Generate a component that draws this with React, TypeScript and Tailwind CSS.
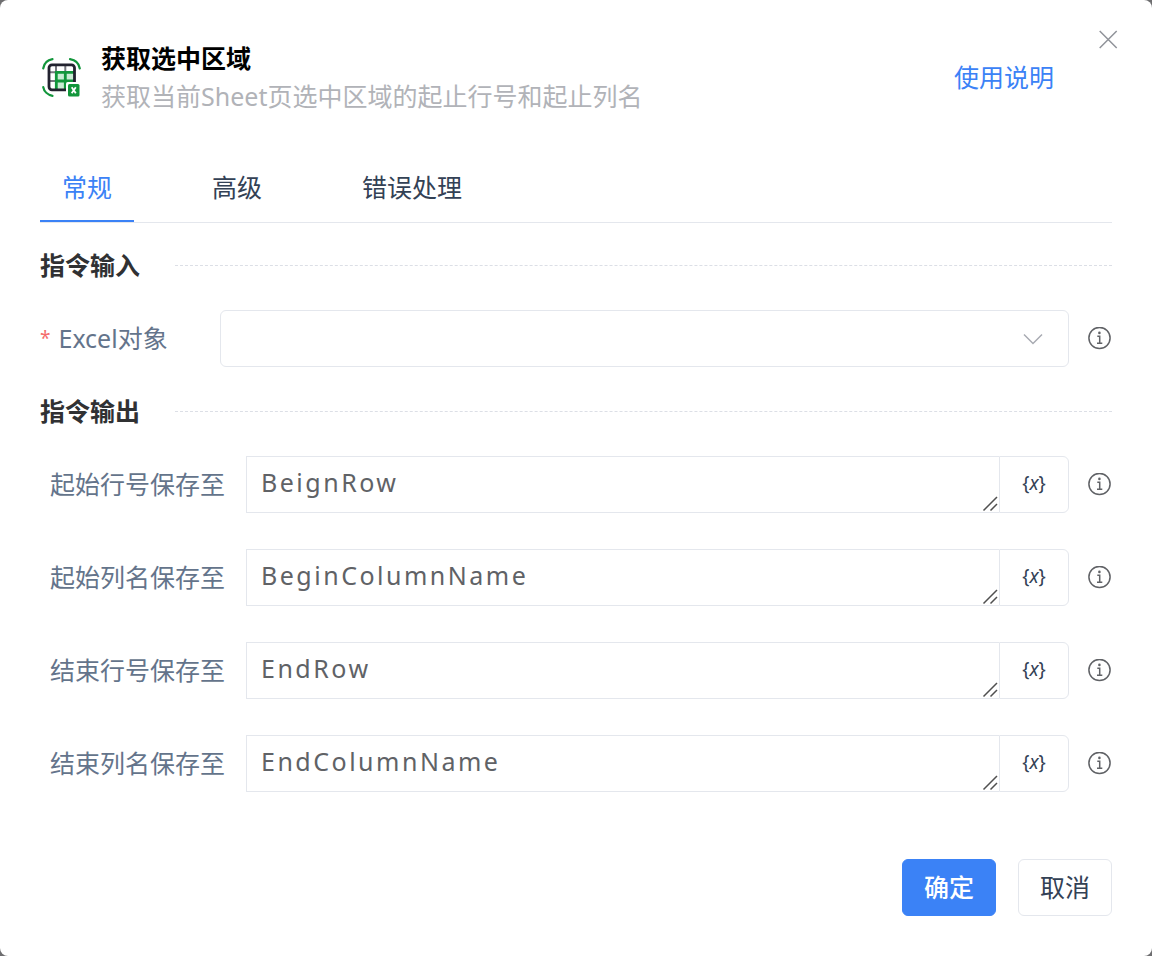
import { useState } from "react";

const BODY_FONT = "font-['Noto_Sans','Noto_Sans_CJK_SC',sans-serif]";

function RegionIcon() {
  return (
    <svg className="size-[42px] shrink-0" viewBox="0 0 42 42" fill="none" aria-hidden="true">
      <g stroke="#12963b" strokeWidth="2.200" strokeLinecap="round">
        <path d="M3.200 12.500C4 7.500 7.800 4 12.500 3.200" />
        <path d="M30 3.200C35 4 39 7.500 39.800 12.500" />
        <path d="M3.200 31C4 35.500 7.800 39 12.500 39.800" />
      </g>
      <rect x="16" y="16" width="18" height="17" fill="#c9ecd3" />
      <path d="M16 9V16M25.300 9V16M9 16.300H16M9 25H16M16 25V33" stroke="#77777f" strokeWidth="2" />
      <path d="M16.300 33V16.300H34M25.300 16.300V33M16.300 25H34" stroke="#12963b" strokeWidth="2.800" />
      <rect x="9" y="8.800" width="25.500" height="25" rx="3" stroke="#22222f" strokeWidth="2.800" />
      <rect x="26" y="26" width="16" height="16" rx="2" fill="#fff" />
      <rect x="28" y="28" width="11.500" height="12.500" rx="1.500" fill="#12963b" />
      <path d="M31.700 31.200L35.800 37.300M35.800 31.200L31.700 37.300" stroke="#fff" strokeWidth="1.800" />
    </svg>
  );
}

function InfoButton({ label }: { label: string }) {
  return (
    <button type="button" aria-label={`${label}说明`} className="size-6 shrink-0 text-[#606266]">
      <svg viewBox="0 0 24 24" className="size-6" fill="none" stroke="currentColor" strokeWidth="1.500">
        <circle cx="11.500" cy="11" r="10.600" />
        <path d="M9.300 9.300H11.700V16.300M9 16.300H14.300" />
        <circle cx="11.400" cy="5.900" r="1.300" fill="currentColor" stroke="none" />
      </svg>
    </button>
  );
}

function SectionTitle({ children }: { children: string }) {
  return (
    <div className="flex items-center gap-[35px]">
      <h2 className="text-[25px] leading-[37px] font-bold text-[#303133]">{children}</h2>
      <div className="flex-1 border-t border-dashed border-[#dcdfe6]" />
    </div>
  );
}

function OutputRow({ id, label, initial }: { id: string; label: string; initial: string }) {
  const [value, setValue] = useState(initial);
  return (
    <div className="flex items-center">
      <label htmlFor={id} className="w-[206px] shrink-0 pl-[10px] text-[25px] leading-[37px] text-[#64748b]">
        {label}
      </label>
      <div className="flex h-[57px] min-w-0 flex-1">
        <textarea
          id={id}
          rows={1}
          value={value}
          onChange={(e) => setValue(e.target.value)}
          className="h-full min-w-0 flex-1 resize-none overflow-hidden border border-r-0 border-[#e4e7ed] bg-white px-[14px] py-[7px] text-[25px] leading-[37px] tracking-widest text-[#606266] outline-none"
        />
        <button
          type="button"
          aria-label={`${label} 选择变量`}
          className="relative w-[70px] shrink-0 rounded-r-md border border-[#e4e7ed] pb-1 text-[19px] leading-6 text-[#334155]"
        >
          {"{"}
          <i>x</i>
          {"}"}
          <svg
            className="pointer-events-none absolute right-full bottom-0 size-[18px]"
            viewBox="0 0 18 18"
            stroke="#505050"
            strokeWidth="1.500"
            aria-hidden="true"
          >
            <path d="M1.500 16.500L15 3M8.500 16.500L15 10" />
          </svg>
        </button>
      </div>
      <div className="ml-[19px] flex">
        <InfoButton label={label} />
      </div>
    </div>
  );
}

const tabs = ["常规", "高级", "错误处理"];

const outputs = [
  { id: "begin-row", label: "起始行号保存至", initial: "BeignRow" },
  { id: "begin-column", label: "起始列名保存至", initial: "BeginColumnName" },
  { id: "end-row", label: "结束行号保存至", initial: "EndRow" },
  { id: "end-column", label: "结束列名保存至", initial: "EndColumnName" },
];

export default function App() {
  const [active, setActive] = useState(0);

  return (
    <div className={`min-h-screen bg-[#6e6e70] ${BODY_FONT}`}>
      <main className="relative flex min-h-screen flex-col rounded-lg bg-white px-10 pt-[39px] pb-10">
        <button type="button" aria-label="关闭" className="absolute top-7 right-8 size-6 text-[#909399]">
          <svg viewBox="0 0 24 24" className="size-6" stroke="currentColor" strokeWidth="1.500">
            <path d="M3.700 3L20.700 20M20.700 3L3.700 20" />
          </svg>
        </button>

        <header className="flex items-center pr-[58px]">
          <RegionIcon />
          <div className="ml-[19px] min-w-0 flex-1">
            <h1 className="text-[25px] leading-[38px] font-bold text-black">获取选中区域</h1>
            <p className="text-[25px] leading-[38px] text-[#b1b3b8]">获取当前Sheet页选中区域的起止行号和起止列名</p>
          </div>
          <a href="#help" className="text-[25px] leading-[38px] text-[#3b82f6]">
            使用说明
          </a>
        </header>

        <div role="tablist" className="mt-[37px] flex gap-14 border-b border-[#e4e7ed]">
          {tabs.map((tab, i) => (
            <button
              key={tab}
              type="button"
              role="tab"
              aria-selected={active === i}
              onClick={() => setActive(i)}
              className={`h-[70px] border-b-2 px-[22px] pt-[2px] text-[25px] leading-[37px] ${
                active === i ? "border-[#3b82f6] text-[#3b82f6]" : "border-transparent text-[#334155]"
              }`}
            >
              {tab}
            </button>
          ))}
        </div>

        <form className="mt-6 flex flex-col gap-[26px]" onSubmit={(e) => e.preventDefault()}>
          <SectionTitle>指令输入</SectionTitle>
          <div className="flex items-center">
            <label
              htmlFor="excel"
              className="flex w-[180px] shrink-0 items-center gap-2 text-[25px] leading-[37px] text-[#64748b]"
            >
              <span className="text-[19px] text-[#f56c6c]">*</span>
              <span>Excel对象</span>
            </label>
            <div className="relative min-w-0 flex-1">
              <select
                id="excel"
                className="block h-[57px] w-full appearance-none rounded-md border border-[#e4e7ed] bg-white px-4 text-[25px] text-[#606266] outline-none"
              >
                <option value=""></option>
              </select>
              <svg
                className="pointer-events-none absolute top-[17px] right-6 size-6"
                viewBox="0 0 24 24"
                fill="none"
                stroke="#a8abb2"
                strokeWidth="1.500"
                aria-hidden="true"
              >
                <path d="M3 7.500L12 16.500L21 7.500" />
              </svg>
            </div>
            <div className="ml-[19px] flex">
              <InfoButton label="Excel对象" />
            </div>
          </div>
          <SectionTitle>指令输出</SectionTitle>
          <div className="flex flex-col gap-9">
            {outputs.map((row) => (
              <OutputRow key={row.id} {...row} />
            ))}
          </div>
        </form>

        <footer className="mt-auto flex justify-end gap-[22px] pt-8">
          <button
            type="button"
            className="h-[57px] rounded-md border border-[#3b82f6] bg-[#3b82f6] px-[21px] text-[25px] leading-[37px] font-medium text-white"
          >
            确定
          </button>
          <button
            type="button"
            className="h-[57px] rounded-md border border-[#e4e7ed] bg-white px-[21px] text-[25px] leading-[37px] text-[#334155]"
          >
            取消
          </button>
        </footer>
      </main>
    </div>
  );
}
